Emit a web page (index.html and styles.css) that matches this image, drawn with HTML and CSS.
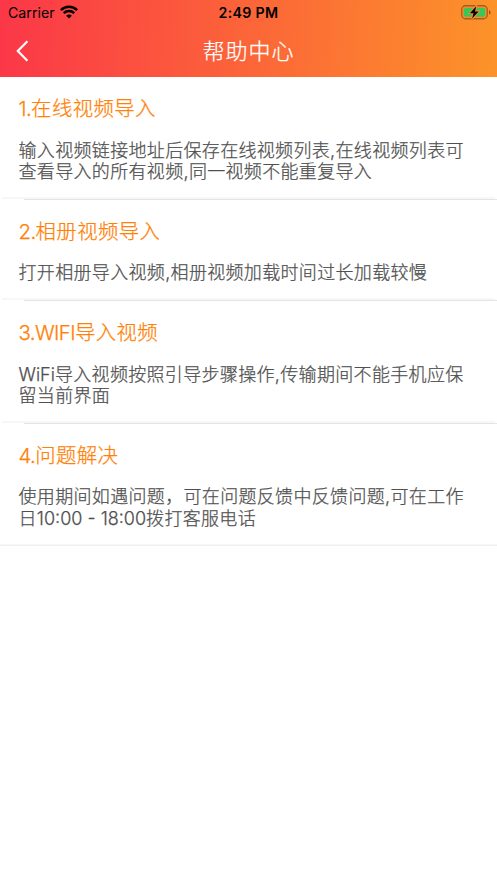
FILE: index.html
```html
<!DOCTYPE html>
<html lang="zh-CN">
<head>
<meta charset="utf-8">
<meta name="viewport" content="width=device-width, initial-scale=1">
<title>帮助中心</title>
<link rel="stylesheet" href="styles.css">
</head>
<body>
<header class="header">
  <div class="status">
    <div class="carrier"><span>Carrier</span>
      <svg class="wifi" viewBox="0 0 18 14" width="18" height="14"><g fill="none" stroke="#000" stroke-width="2.4"><path d="M.9 5.1a11.5 11.5 0 0 1 16.2 0"/><path d="M3.8 8.2a7.4 7.4 0 0 1 10.4 0"/></g><path d="M9 13.5 6.2 10.8a4 4 0 0 1 5.6 0z"/></svg>
    </div>
    <time class="clock">2:49 PM</time>
    <svg class="battery" viewBox="0 0 30 15" width="30" height="15"><rect x=".75" y=".75" width="25.5" height="13" rx="3.8" fill="none" stroke="#a45c22" stroke-width="1.3"/><path d="M28 5v4.6q1.5-.7 1.5-2.3T28 5z" fill="#93531f"/><rect x="2.4" y="2.4" width="22.2" height="9.7" rx="2.2" fill="#34c759" stroke="#fc8a2c" stroke-width=".8"/><path d="M15.2 1.2 8.9 8.2h3.6l-1.4 5.4 6.5-7.1H14z" fill="#000" stroke="#fc8a2c" stroke-width="2" paint-order="stroke"/></svg>
  </div>
  <nav class="nav">
    <svg class="back" viewBox="0 0 13 22" width="13" height="22"><path d="M11.4 1.2 1.8 11l9.6 9.8" fill="none" stroke="#fff" stroke-width="2.2"/></svg>
    <h1 class="page-title">帮助中心</h1>
  </nav>
</header>
<main class="list">
  <section class="item">
    <h2 class="item-title"><span class="latin">1.</span>在线视频导入</h2>
    <p class="item-text">输入视频链接地址后保存在线视频列表,在线视频列表可<br>查看导入的所有视频,同一视频不能重复导入</p>
  </section>
  <section class="item item-short">
    <h2 class="item-title"><span class="latin">2.</span>相册视频导入</h2>
    <p class="item-text">打开相册导入视频,相册视频加载时间过长加载较慢</p>
  </section>
  <section class="item">
    <h2 class="item-title"><span class="latin">3.WIFI</span>导入视频</h2>
    <p class="item-text"><span class="latin">WiFi</span>导入视频按照引导步骤操作,传输期间不能手机应保<br>留当前界面</p>
  </section>
  <section class="item">
    <h2 class="item-title"><span class="latin">4.</span>问题解决</h2>
    <p class="item-text">使用期间如遇问题，可在问题反馈中反馈问题,可在工作<br>日<span class="latin">10:00 - 18:00</span>拨打客服电话</p>
  </section>
</main>
</body>
</html>
```
FILE: styles.css
```css
* { box-sizing: border-box; }
body {
  margin: 0;
  min-height: 883px;
  background: #fff;
  font-family: Inter, "Noto Sans CJK SC", sans-serif;
}
h1, h2, p {
  margin: 0;
  font-weight: 300;
  white-space: nowrap;
  -webkit-text-stroke: .25px currentColor;
}
svg { display: block; }
.header {
  height: 77px;
  background: linear-gradient(92deg, #fb3748 0%, #fc9329 100%);
}
.status {
  height: 25px;
  padding: 0 6px 0 8px;
  display: grid;
  grid-template-columns: 1fr auto 1fr;
  align-items: center;
  color: #000;
  font-size: 14.2px;
  line-height: 25px;
}
.carrier { display: flex; align-items: center; gap: 6px; letter-spacing: 0; }
.wifi { margin: -1px 0 0 -1px; }
.clock { font-weight: 600; letter-spacing: .3px; margin-right: 2px; }
.battery { justify-self: end; margin-top: -1px; }
.nav {
  height: 52px;
  display: grid;
  grid-template-columns: 1fr auto 1fr;
  align-items: center;
  padding: 0 16px;
}
.page-title { color: #fff; font-size: 22px; line-height: 30px; letter-spacing: .9px; }
.item {
  height: 122.6px;
  padding: 19px 18px 0 18.5px;
  background:
    linear-gradient(#e4e4e4, #e4e4e4) 24px 100% / 100% 1px no-repeat,
    linear-gradient(#f7f7f7, #f7f7f7) 2px calc(100% - 1px) / calc(100% - 4px) 2px no-repeat;
}
.item-short { height: 101.4px; }
.item:last-child {
  background: linear-gradient(#fafafa, #ededed) 0 100% / 100% 2px no-repeat;
}
.item-title {
  color: #ff8207;
  font-size: 20.4px;
  line-height: 25px;
  letter-spacing: .4px;
}
.item-title .latin { letter-spacing: -.6px; }
.item-text {
  margin-top: 18.7px;
  color: #505050;
  font-size: 18px;
  line-height: 21.4px;
  letter-spacing: .33px;
}
.item-text .latin { letter-spacing: 0; }
```
